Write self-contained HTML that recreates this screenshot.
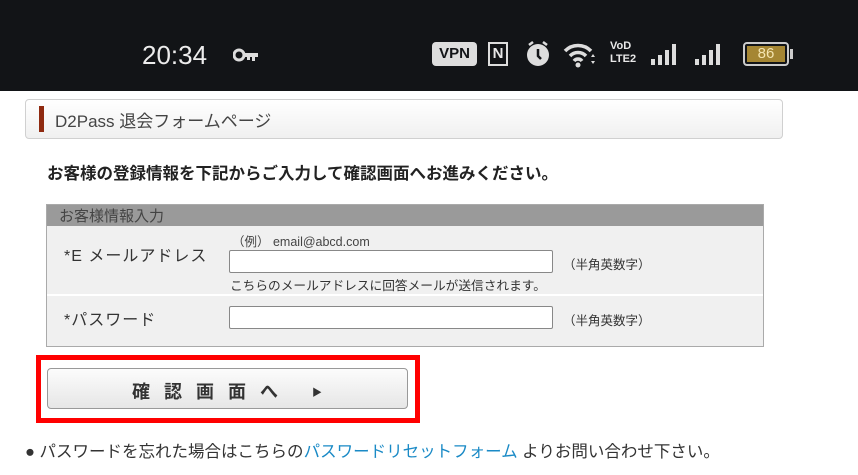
<!DOCTYPE html><html><head><meta charset="utf-8"><style>
body{margin:0;width:858px;height:475px;background:#fff;position:relative;overflow:hidden;font-family:"Liberation Sans","Noto Sans CJK JP",sans-serif;color:#333}
.a{position:absolute;white-space:nowrap}
.sb{position:absolute;left:0;top:0;width:858px;height:91px;background:#121417;color:#e8e8e8}
.inp{position:absolute;left:229px;width:322px;height:21px;background:#fff;border:1px solid #888;border-radius:2px}
.bar{position:absolute;background:#ddd;width:4px;bottom:0}
</style></head><body>
<div class="sb">
<div class="a" style="left:142px;top:40px;font-size:26px;color:#ececec">20:34</div>
<svg class="a" style="left:233px;top:48px" width="26" height="14"><circle cx="6" cy="7" r="5" fill="none" stroke="#ddd" stroke-width="3"/><path d="M10 5h15v4h-3v4h-3v-4h-2v3h-3v-3h-4z" fill="#ddd"/></svg>
<div class="a" style="left:432px;top:42px;width:45px;height:24px;background:#ddd;border-radius:4px;color:#121417;font-size:15px;font-weight:bold;text-align:center;line-height:24px">VPN</div>
<div class="a" style="left:488px;top:42px;width:20px;height:24px;border:2px solid #ddd;box-sizing:border-box;font-size:15px;font-weight:bold;text-align:center;line-height:20px">N</div>
<svg class="a" style="left:525px;top:40px" width="26" height="28"><circle cx="13" cy="15" r="11" fill="#ddd"/><path d="M13 9v7l3 3" stroke="#121417" stroke-width="2.5" fill="none"/><path d="M4 5l4-3M22 5l-4-3" stroke="#ddd" stroke-width="2.5"/></svg>
<svg class="a" style="left:563px;top:42px" width="34" height="26"><path d="M2 9a18 18 0 0 1 26 0" stroke="#ddd" stroke-width="3.5" fill="none"/><path d="M7 14a11 11 0 0 1 16 0" stroke="#ddd" stroke-width="3.5" fill="none"/><path d="M11 19a5 5 0 0 1 8 0" stroke="#ddd" stroke-width="3.5" fill="none"/><circle cx="15" cy="23" r="2.5" fill="#ddd"/><path d="M28 15l2-3 2 3zM28 19l2 3 2-3z" fill="#ddd"/></svg>
<div class="a" style="left:610px;top:40px;font-size:11px;line-height:13px;font-weight:bold">VoD<br>LTE2</div>
<div class="a" style="left:651px;top:44px;width:36px;height:21px">
<div class="bar" style="left:0;height:6px"></div><div class="bar" style="left:7px;height:10px"></div><div class="bar" style="left:14px;height:15px"></div><div class="bar" style="left:21px;height:21px"></div></div>
<div class="a" style="left:695px;top:44px;width:36px;height:21px">
<div class="bar" style="left:0;height:6px"></div><div class="bar" style="left:7px;height:10px"></div><div class="bar" style="left:14px;height:15px"></div><div class="bar" style="left:21px;height:21px"></div></div>
<div class="a" style="left:743px;top:42px;width:46px;height:24px;border:2px solid #ccc;border-radius:4px;box-sizing:border-box;padding:2px"><div style="background:#a58633;height:100%;color:#f4e4b0;font-size:15px;text-align:center;line-height:16px">86</div></div>
<div class="a" style="left:790px;top:49px;width:3px;height:10px;background:#ccc"></div>
</div>
<div class="a" style="left:25px;top:99px;width:756px;height:38px;border:1px solid #d0d0d0;border-radius:4px;background:linear-gradient(#fff,#f0f0f0)"></div>
<div class="a" style="left:39px;top:106px;width:5px;height:26px;background:#8f2a10"></div>
<div class="a" style="left:55px;top:107px;font-size:17px;color:#444">D2Pass 退会フォームページ</div>
<div class="a" style="left:47px;top:160px;font-size:16.5px;font-weight:bold;color:#222">お客様の登録情報を下記からご入力して確認画面へお進みください。</div>
<div class="a" style="left:46px;top:204px;width:716px;height:141px;background:#f0f0f0;border:1px solid #aaa"></div>
<div class="a" style="left:47px;top:205px;width:716px;height:21px;background:#9a9a9a"></div>
<div class="a" style="left:59px;top:205px;font-size:15px;color:#444">お客様情報入力</div>
<div class="a" style="left:47px;top:294px;width:716px;height:2px;background:#fff"></div>
<div class="a" style="left:64px;top:242px;font-size:16px;letter-spacing:1px;color:#333">*E メールアドレス</div>
<div class="a" style="left:232px;top:231px;font-size:12.5px;color:#444">（例） email@abcd.com</div>
<div class="inp" style="top:250px"></div>
<div class="a" style="left:563px;top:254px;font-size:12.5px">（半角英数字）</div>
<div class="a" style="left:230px;top:275px;font-size:12.7px">こちらのメールアドレスに回答メールが送信されます。</div>
<div class="a" style="left:64px;top:306px;font-size:16px;letter-spacing:1px">*パスワード</div>
<div class="inp" style="top:306px"></div>
<div class="a" style="left:563px;top:310px;font-size:12.5px">（半角英数字）</div>
<div class="a" style="left:36px;top:355px;width:374px;height:58px;border:5px solid #f00"></div>
<div class="a" style="left:47px;top:368px;width:361px;height:41px;border:1px solid #999;border-radius:4px;background:linear-gradient(#fcfcfc,#e6e6e6);box-sizing:border-box"></div>
<div class="a" style="left:132px;top:378px;font-size:18px;font-weight:bold;letter-spacing:14px;color:#333">確認画面へ</div>
<div class="a" style="left:312px;top:384px;font-size:10px;color:#333">▶</div>
<div class="a" style="left:25px;top:438px;font-size:16.5px;color:#333">● パスワードを忘れた場合はこちらの<span style="color:#1a8ac6">パスワードリセットフォーム</span> よりお問い合わせ下さい。</div>
</body></html>
